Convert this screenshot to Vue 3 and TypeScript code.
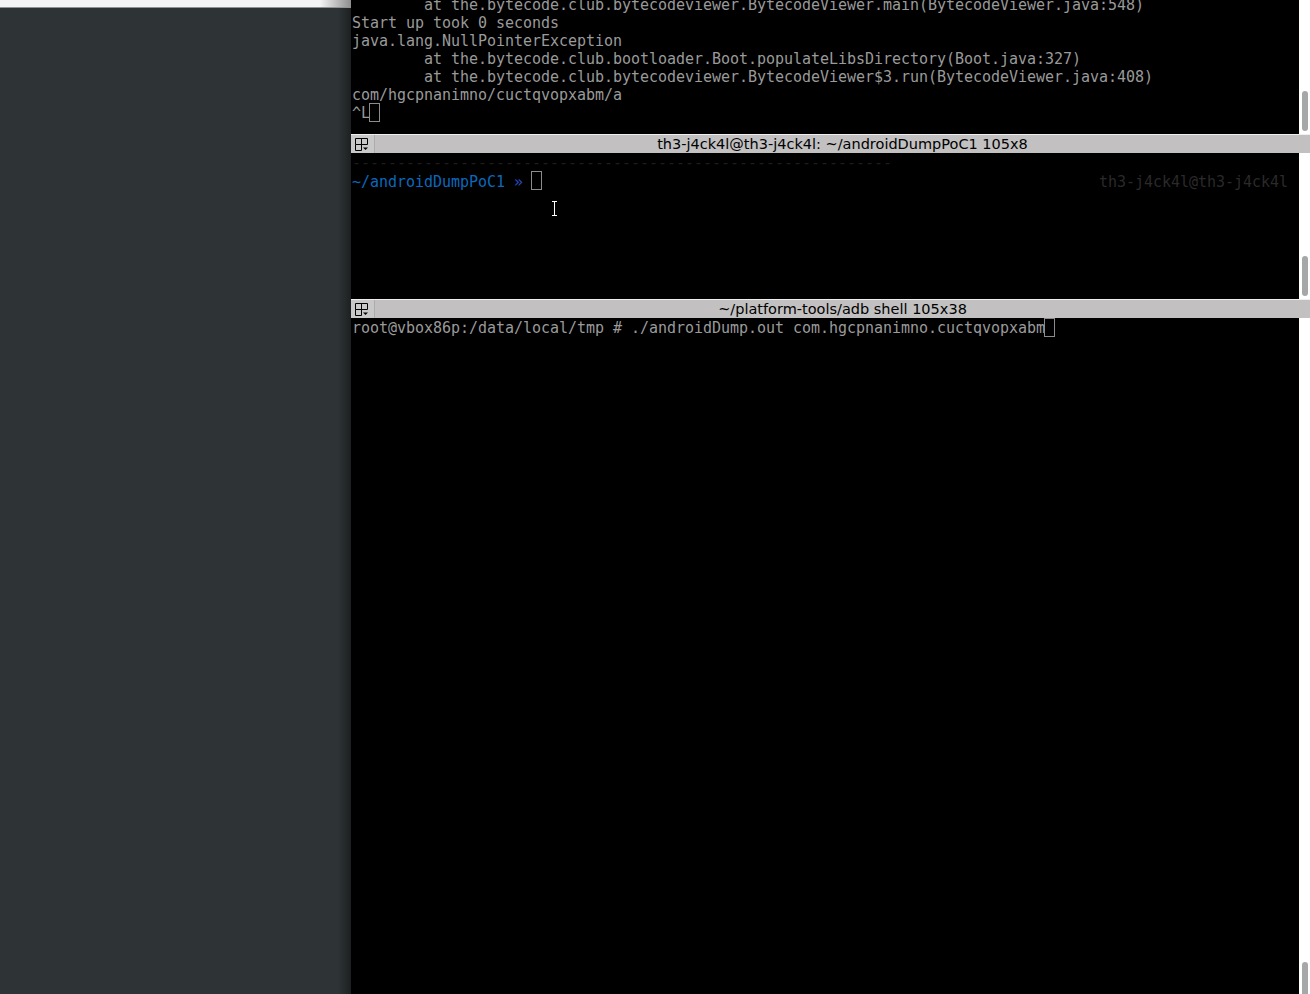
<script setup lang="ts">
interface Pane {
  title: string
}

const logLines: { text: string; indented?: boolean }[] = [
  { text: 'at the.bytecode.club.bytecodeviewer.BytecodeViewer.main(BytecodeViewer.java:548)', indented: true },
  { text: 'Start up took 0 seconds' },
  { text: 'java.lang.NullPointerException' },
  { text: 'at the.bytecode.club.bootloader.Boot.populateLibsDirectory(Boot.java:327)', indented: true },
  { text: 'at the.bytecode.club.bytecodeviewer.BytecodeViewer$3.run(BytecodeViewer.java:408)', indented: true },
  { text: 'com/hgcpnanimno/cuctqvopxabm/a' },
]

const middle: Pane = { title: 'th3-j4ck4l@th3-j4ck4l: ~/androidDumpPoC1 105x8' }
const bottom: Pane = { title: '~/platform-tools/adb shell 105x38' }
const rule = '-'.repeat(60)
</script>

<template>
  <div class="desktop">
    <aside class="side">
      <div class="side-top"></div>
    </aside>

    <main class="terminal">
      <section class="pane pane-top">
        <div class="body body-end">
          <div v-for="line in logLines" :key="line.text" class="line" :class="{ indented: line.indented }">{{ line.text }}</div>
          <div class="line">^L<span class="cursor"></span></div>
        </div>
        <div class="gutter gutter-end"><div class="thumb"></div></div>
      </section>

      <header class="titlebar">
        <span class="menu-btn">
          <svg width="13" height="13" viewBox="0 0 13 13" aria-hidden="true">
            <path d="M0.5 0.5H12.5V6.5H0.5ZM6.5 0.5V12.5M0.5 6.5V12.5H6.5" fill="none" stroke="#000" stroke-width="1" />
            <path d="M8 9.5H13L10.5 12Z" fill="#000" />
          </svg>
        </span>
        <span class="title">{{ middle.title }}</span>
      </header>

      <section class="pane pane-mid">
        <div class="body">
          <div class="line rule">{{ rule }}</div>
          <div class="line prompt-line">
            <span><span class="path">~/androidDumpPoC1</span> <span class="chev">»</span> <span class="cursor"></span></span>
            <span class="host">th3-j4ck4l@th3-j4ck4l</span>
          </div>
        </div>
        <div class="gutter gutter-end"><div class="thumb"></div></div>
      </section>

      <header class="titlebar">
        <span class="menu-btn">
          <svg width="13" height="13" viewBox="0 0 13 13" aria-hidden="true">
            <path d="M0.5 0.5H12.5V6.5H0.5ZM6.5 0.5V12.5M0.5 6.5V12.5H6.5" fill="none" stroke="#000" stroke-width="1" />
            <path d="M8 9.5H13L10.5 12Z" fill="#000" />
          </svg>
        </span>
        <span class="title">{{ bottom.title }}</span>
      </header>

      <section class="pane pane-bottom">
        <div class="body">
          <div class="line">root@vbox86p:/data/local/tmp # ./androidDump.out com.hgcpnanimno.cuctqvopxabm<span class="cursor"></span></div>
        </div>
        <div class="gutter gutter-end"><div class="thumb thumb-bottom"></div></div>
      </section>
    </main>

    <svg class="ibeam" width="7" height="15" viewBox="0 0 7 15" aria-hidden="true">
      <path d="M0 0.5H7M0 14.5H7M3.5 0.5V14.5" fill="none" stroke="#000" stroke-width="3" />
      <path d="M1 0.5H6M1 14.5H6M3.5 0.5V14.5" fill="none" stroke="#fff" stroke-width="1" />
    </svg>
  </div>
</template>

<style>
html,
body {
  margin: 0;
  background: #000;
}
</style>

<style scoped>
.desktop {
  position: relative;
  display: flex;
  height: 994px;
  overflow: hidden;
}

.side {
  width: 351px;
  flex: none;
  background: linear-gradient(to right, #2e3436 0, #2e3436 338px, #1c2021 351px);
}

.side-top {
  height: 8px;
  background: linear-gradient(to right, #f4f4f4 0, #f4f4f4 320px, #8e8e8e 351px);
  border-bottom: 1px solid #8f9192;
  box-sizing: border-box;
}

.terminal {
  flex: 1;
  min-width: 0;
  display: flex;
  flex-direction: column;
  background: #000;
}

.pane {
  display: flex;
  min-height: 0;
}

.pane-top {
  height: 134px;
  flex: none;
}

.pane-mid {
  height: 146px;
  flex: none;
}

.pane-bottom {
  flex: 1;
}

.body {
  flex: 1;
  min-width: 0;
  overflow: hidden;
  padding: 1px 11px 0 1px;
  color: #9a9a9a;
  font: 15px/18px "DejaVu Sans Mono", monospace;
  letter-spacing: -0.03px;
}

.body-end {
  display: flex;
  flex-direction: column;
  justify-content: flex-end;
  padding-bottom: 12px;
}

.line {
  height: 18px;
  white-space: pre;
  flex: none;
}

.indented {
  padding-left: 72px;
}

.cursor {
  display: inline-block;
  width: 11px;
  height: 19px;
  margin: -1px 0 0 -1px;
  box-sizing: border-box;
  border: 1px solid #8c8c8c;
  vertical-align: top;
}

.rule {
  color: #1d1d1d;
}

.prompt-line {
  display: flex;
  justify-content: space-between;
  line-height: 20px;
}

.path {
  color: #0b69bd;
}

.chev {
  color: #2a50c8;
}

.host {
  color: #2a2a2a;
}

.gutter {
  width: 11px;
  flex: none;
  background: #fff;
  display: flex;
  flex-direction: column;
  align-items: center;
}

.gutter-end {
  justify-content: flex-end;
  padding-bottom: 3px;
  box-sizing: border-box;
}

.thumb {
  width: 6px;
  height: 40px;
  border-radius: 3px;
  background: #a6a8a8;
}

.thumb-bottom {
  height: 32px;
  margin-bottom: -3px;
  border-radius: 3px 3px 0 0;
}

.titlebar {
  height: 19px;
  flex: none;
  box-sizing: border-box;
  display: flex;
  align-items: center;
  position: relative;
  background: #c2c0c0;
  border-top: 1px solid #efefef;
  color: #000;
  font: 14.5px/18px "DejaVu Sans", sans-serif;
}

.menu-btn {
  width: 24px;
  height: 18px;
  flex: none;
  display: flex;
  align-items: center;
  padding-left: 4px;
  box-sizing: border-box;
  background: #c9c8c8;
  border-right: 1px solid #adabab;
}

.title {
  flex: 1;
  text-align: center;
  white-space: pre;
}

.ibeam {
  position: absolute;
  left: 551px;
  top: 201px;
}
</style>
